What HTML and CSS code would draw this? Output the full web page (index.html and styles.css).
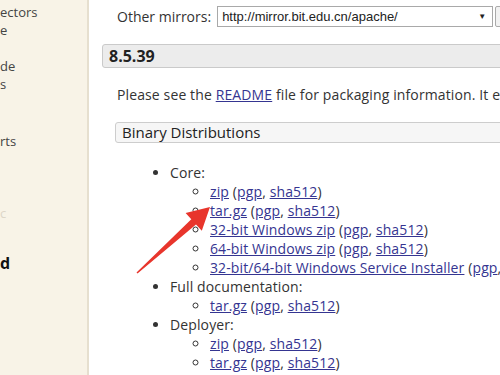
FILE: index.html
```html
<html lang="en">
  <head>
    <meta charset="utf-8">
    <link rel="stylesheet" href="styles.css">
  </head>
  <body>
    <div class="side-nav">
      <div class="nav-item first">ectors</div>
      <div class="nav-item">e</div>
      <div class="nav-item gap">de</div>
      <div class="nav-item">s</div>
      <div class="nav-item gap-lg">rts</div>
      <div class="nav-item faint">c</div>
      <div class="nav-item nav-head">d</div>
    </div>
    <div class="main">
      <div class="mirrors">
        <span class="mirrors-label">Other mirrors:</span>
        <div class="select">
          <span>http://mirror.bit.edu.cn/apache/</span>
          <span class="select-arrow">&#9660;</span>
        </div>
        <div class="change-btn"></div>
      </div>
      <h3 class="version-title">8.5.39</h3>
      <div class="section">
        <p class="intro">Please see the <a href="#">README</a> file for packaging information. It explains what every distribution contains.</p>
        <h4 class="sub-title">Binary Distributions</h4>
        <ul class="dist-list">
          <li>Core:
            <ul>
              <li><a href="#">zip</a> (<a href="#">pgp</a>, <a href="#">sha512</a>)</li>
              <li><a href="#">tar.gz</a> (<a href="#">pgp</a>, <a href="#">sha512</a>)</li>
              <li><a href="#">32-bit Windows zip</a> (<a href="#">pgp</a>, <a href="#">sha512</a>)</li>
              <li><a href="#">64-bit Windows zip</a> (<a href="#">pgp</a>, <a href="#">sha512</a>)</li>
              <li><a href="#">32-bit/64-bit Windows Service Installer</a> (<a href="#">pgp</a>, <a href="#">sha512</a>)</li>
            </ul>
          </li>
          <li>Full documentation:
            <ul>
              <li><a href="#">tar.gz</a> (<a href="#">pgp</a>, <a href="#">sha512</a>)</li>
            </ul>
          </li>
          <li>Deployer:
            <ul>
              <li><a href="#">zip</a> (<a href="#">pgp</a>, <a href="#">sha512</a>)</li>
              <li><a href="#">tar.gz</a> (<a href="#">pgp</a>, <a href="#">sha512</a>)</li>
            </ul>
          </li>
        </ul>
      </div>
    </div>
    <svg class="arrow" width="500" height="375" viewBox="0 0 500 375">
      <polygon points="136.5,272.5 191.3,219.2 185.6,212.9 210,207 201.8,230.7 196,224.4 137.5,273.5" fill="#e8352c"/>
    </svg>
  </body>
</html>
```

FILE: styles.css
```css
body {
  margin: 0;
  display: flex;
  flex-direction: row;
  height: 375px;
  overflow: hidden;
  background-color: #fff;
  color: #333;
  font-family: "Open Sans", sans-serif;
  font-size: 14px;
}

a {
  color: #353591;
}

.side-nav {
  width: 87px;
  flex-shrink: 0;
  background-color: #f8f3e7;
  border-right: 2px solid #e6dfcf;
  font-size: 13px;
  line-height: 18px;
  color: #444;
}

.nav-item.first {
  margin-top: 3px;
}

.nav-item.gap {
  margin-top: 18px;
}

.nav-item.gap-lg {
  margin-top: 39px;
}

.nav-item.faint {
  margin-top: 54px;
  color: #ddd6c8;
}

.nav-item.nav-head {
  margin-top: 32px;
  font-size: 16px;
  font-weight: bold;
  color: #111;
}

.main {
  flex: 1;
  padding-left: 13px;
  overflow: hidden;
}

.mirrors {
  display: flex;
  align-items: center;
  padding: 6px 0 0 15px;
  height: 20px;
  width: 500px;
}

.mirrors-label {
  margin-right: 6px;
}

.select {
  display: flex;
  align-items: center;
  box-sizing: border-box;
  width: 276px;
  height: 21px;
  border: 1px solid #a9a9a9;
  padding-left: 4px;
  font-family: "Liberation Sans", Arial, sans-serif;
  font-size: 13px;
  color: #222;
}

.select-arrow {
  margin-left: auto;
  margin-right: 6px;
  font-size: 8px;
}

.change-btn {
  margin-left: 2px;
  width: 30px;
  height: 21px;
  box-sizing: border-box;
  border: 1px solid #aaa;
  border-radius: 2px;
  background-color: #f2f2f2;
}

.version-title {
  margin: 18px -20px 0 0;
  height: 22px;
  line-height: 22px;
  padding-left: 6px;
  background-color: #ececec;
  border: 1px solid #cacaca;
  border-radius: 3px;
  font-size: 16px;
  font-weight: bold;
  color: #222;
}

.section {
  padding-left: 13px;
}

.intro {
  margin: 17px 0 0 2px;
  line-height: 20px;
  white-space: nowrap;
  letter-spacing: 0.12px;
}

.sub-title {
  margin: 17px -20px 0 0;
  height: 19px;
  line-height: 19px;
  padding-left: 6px;
  background-color: #f6f6f6;
  border: 1px solid #cdcdcd;
  border-radius: 3px;
  font-size: 15px;
  font-weight: normal;
  color: #222;
}

.dist-list {
  margin: 20px 0 0 15px;
  padding-left: 40px;
  line-height: 19px;
  white-space: nowrap;
  letter-spacing: 0.12px;
}

.dist-list ul {
  margin: 0;
  padding-left: 40px;
}

.arrow {
  position: absolute;
  left: 0;
  top: 0;
  pointer-events: none;
}
```
